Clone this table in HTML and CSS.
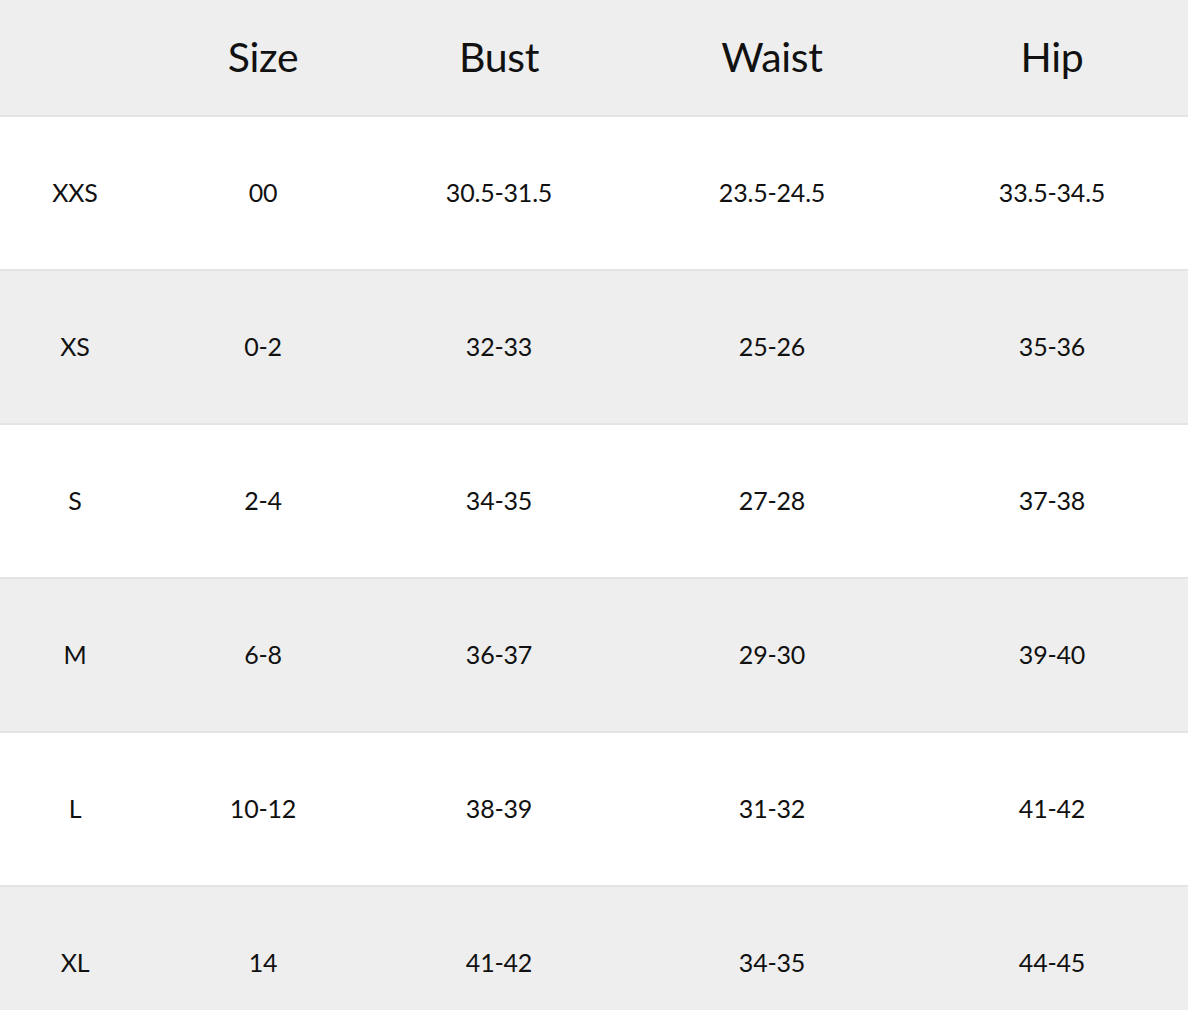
FILE: index.html
```html
<!DOCTYPE html>
<html>
<head>
<meta charset="utf-8">
<link rel="stylesheet" href="styles.css">
</head>
<body>
<table class="chart">
  <colgroup>
    <col class="c1"><col class="c2"><col class="c3"><col class="c4"><col class="c5">
  </colgroup>
  <thead>
    <tr class="head"><th></th><th>Size</th><th>Bust</th><th>Waist</th><th>Hip</th></tr>
  </thead>
  <tbody>
    <tr class="w"><td>XXS</td><td>00</td><td>30.5-31.5</td><td>23.5-24.5</td><td>33.5-34.5</td></tr>
    <tr class="g"><td>XS</td><td>0-2</td><td>32-33</td><td>25-26</td><td>35-36</td></tr>
    <tr class="w"><td>S</td><td>2-4</td><td>34-35</td><td>27-28</td><td>37-38</td></tr>
    <tr class="g"><td>M</td><td>6-8</td><td>36-37</td><td>29-30</td><td>39-40</td></tr>
    <tr class="w"><td>L</td><td>10-12</td><td>38-39</td><td>31-32</td><td>41-42</td></tr>
    <tr class="g"><td>XL</td><td>14</td><td>41-42</td><td>34-35</td><td>44-45</td></tr>
  </tbody>
</table>
</body>
</html>
```
FILE: styles.css
```css
html, body {
  margin: 0;
  padding: 0;
  background: #ffffff;
}
body {
  font-family: Lato, "Noto Sans", sans-serif;
  color: #111111;
  overflow: hidden;
}
.chart {
  width: 1188px;
  border-collapse: collapse;
  table-layout: fixed;
}
.c1 { width: 150px; }
.c2 { width: 226px; }
.c3 { width: 246px; }
.c4 { width: 300px; }
.c5 { width: 266px; }
.chart th,
.chart td {
  padding: 0;
  text-align: center;
  vertical-align: middle;
  font-weight: 400;
}
.chart th:last-child,
.chart td:last-child {
  padding-right: 6px;
}
.chart tr {
  border-bottom: 2px solid #e4e4e4;
}
.head {
  background: #eeeeee;
  height: 116px;
}
.head th {
  font-size: 41px;
  letter-spacing: -0.3px;
  padding-bottom: 2px;
}
.chart td {
  height: 150px;
  font-size: 25px;
  letter-spacing: -0.2px;
  padding-bottom: 2px;
}
.w { background: #ffffff; }
.g { background: #eeeeee; }
```
